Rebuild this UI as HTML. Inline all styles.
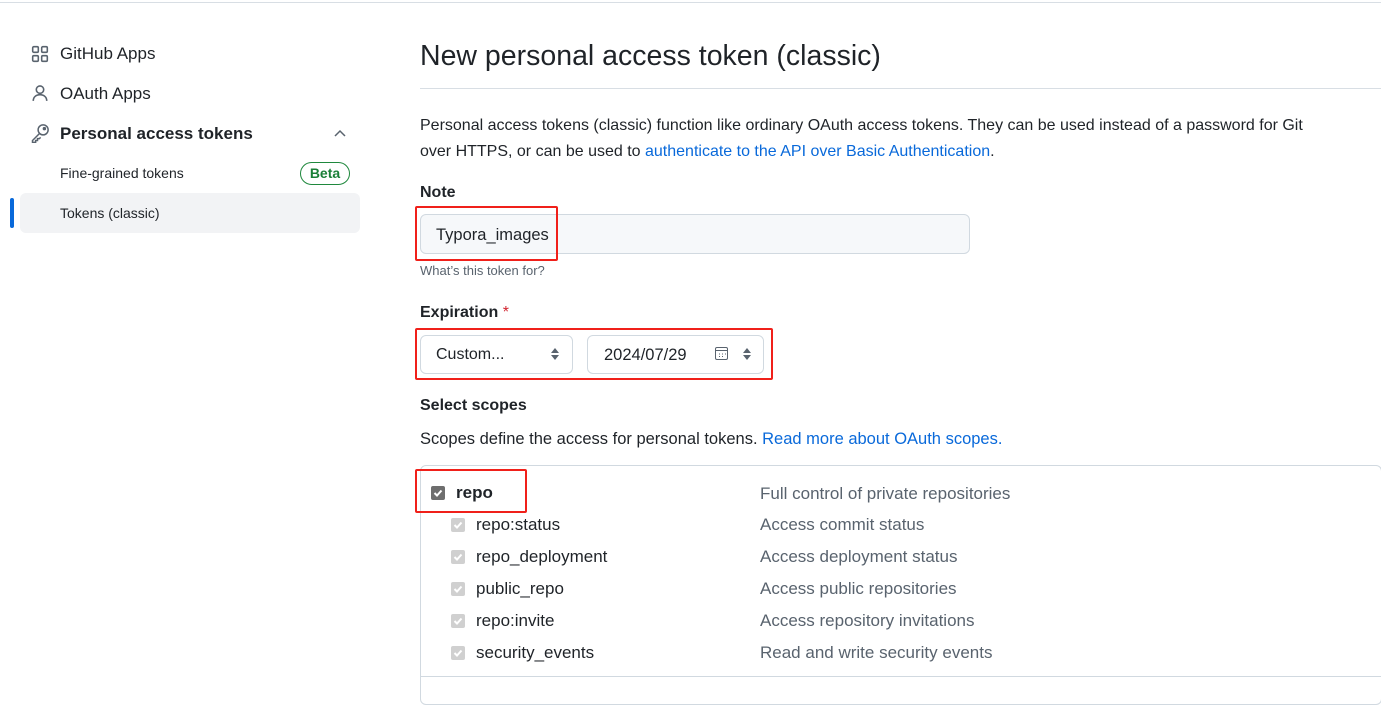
<!DOCTYPE html>
<html><head><meta charset="utf-8"><style>
*{margin:0;padding:0;box-sizing:border-box}
body{width:1381px;height:684px;overflow:hidden;background:#fff;font-family:"Liberation Sans",sans-serif;color:#1f2328;position:relative}
.a{position:absolute;white-space:nowrap}
.m{color:#59636e}
.lk{color:#0969da}
.red{position:absolute;border:2px solid #f0201a;border-radius:2px}
.inp{position:absolute;border:1px solid #d1d9e0;border-radius:6px}
.cb{position:absolute;width:14px;height:14px;border-radius:2px;background:#d0d0d0}
.cb svg{position:absolute;left:1px;top:1px}
</style></head><body>
<div class="a" style="left:0;top:2px;width:1381px;height:1px;background:#d8dee4"></div>

<svg class="a" style="left:31px;top:45px" width="18" height="18" viewBox="0 0 16 16" fill="none" stroke="#59636e" stroke-width="1.4"><rect x="1.5" y="1.5" width="5" height="5" rx="1"/><rect x="9.5" y="1.5" width="5" height="5" rx="1"/><rect x="1.5" y="9.5" width="5" height="5" rx="1"/><rect x="9.5" y="9.5" width="5" height="5" rx="1"/></svg>
<div class="a" style="left:60px;top:44px;font-size:17px">GitHub Apps</div>
<svg class="a" style="left:31px;top:84px" width="18" height="18" viewBox="0 0 16 16" fill="none" stroke="#59636e" stroke-width="1.4"><circle cx="8" cy="5" r="3.3"/><path d="M2 15c0-3.5 2.7-5.5 6-5.5s6 2 6 5.5"/></svg>
<div class="a" style="left:60px;top:84px;font-size:17px">OAuth Apps</div>
<svg class="a" style="left:30px;top:123px" width="20" height="20" viewBox="0 0 16 16" fill="none" stroke="#59636e" stroke-width="1.2"><circle cx="10.5" cy="5.5" r="4"/><path d="M7.5 8.5L2 14v1.5h2.5V14H6v-1.5h1.5l1-1"/><circle cx="11.5" cy="4.5" r=".8" fill="#59636e"/></svg>
<div class="a" style="left:60px;top:124px;font-size:17px;font-weight:bold">Personal access tokens</div>
<svg class="a" style="left:333px;top:128px" width="14" height="10" viewBox="0 0 14 10" fill="none" stroke="#59636e" stroke-width="1.5"><path d="M2 8l5-5 5 5"/></svg>
<div class="a" style="left:60px;top:165px;font-size:14px">Fine-grained tokens</div>
<div class="a" style="left:300px;top:162px;width:50px;height:23px;border:1px solid #1f883d;border-radius:12px;color:#1a7f37;font-size:14px;font-weight:bold;text-align:center;line-height:21px">Beta</div>
<div class="a" style="left:20px;top:193px;width:340px;height:40px;background:#f2f3f5;border-radius:6px"></div>
<div class="a" style="left:10px;top:198px;width:4px;height:30px;background:#0969da;border-radius:2px"></div>
<div class="a" style="left:60px;top:205px;font-size:14px">Tokens (classic)</div>

<div class="a" style="left:420px;top:40px;font-size:28.5px">New personal access token (classic)</div>
<div class="a" style="left:420px;top:88px;width:961px;height:1px;background:#d8dee4"></div>
<div class="a" style="left:420px;top:113px;font-size:16px;line-height:26px;white-space:normal;width:900px">Personal access tokens (classic) function like ordinary OAuth access tokens. They can be used instead of a password for Git over HTTPS, or can be used to <span class="lk">authenticate to the API over Basic Authentication</span>.</div>

<div class="a" style="left:420px;top:184px;font-size:16px;font-weight:bold">Note</div>
<div class="inp" style="left:420px;top:214px;width:550px;height:40px;background:#f6f8fa"></div>
<div class="a" style="left:436px;top:226px;font-size:16.5px">Typora_images</div>
<div class="red" style="left:415px;top:206px;width:143px;height:55px"></div>
<div class="a m" style="left:420px;top:263px;font-size:13px">What’s this token for?</div>

<div class="a" style="left:420px;top:304px;font-size:16px;font-weight:bold">Expiration <span style="color:#d1242f;font-weight:normal">*</span></div>
<div class="inp" style="left:420px;top:335px;width:153px;height:39px"></div>
<div class="a" style="left:436px;top:346px;font-size:16px">Custom...</div>
<svg class="a" style="left:550px;top:347px" width="10" height="14" viewBox="0 0 10 14" fill="#59636e"><path d="M5 1l4 5H1zM5 13l4-5H1z"/></svg>
<div class="inp" style="left:587px;top:335px;width:177px;height:39px"></div>
<div class="a" style="left:604px;top:346px;font-size:16.5px">2024/07/29</div>
<svg class="a" style="left:714px;top:346px" width="15" height="15" viewBox="0 0 15 15" fill="none" stroke="#59636e"><rect x="1.5" y="1.5" width="12" height="12" rx="1.5"/><path d="M1.5 4.5h12M5 8h1M8 8h1M11 8h1M5 10.5h1M8 10.5h1"/></svg>
<svg class="a" style="left:742px;top:347px" width="10" height="14" viewBox="0 0 10 14" fill="#59636e"><path d="M5 1l4 5H1zM5 13l4-5H1z"/></svg>
<div class="red" style="left:415px;top:328px;width:358px;height:52px"></div>

<div class="a" style="left:420px;top:397px;font-size:16px;font-weight:bold">Select scopes</div>
<div class="a" style="left:420px;top:430px;font-size:16.5px">Scopes define the access for personal tokens. <span class="lk">Read more about OAuth scopes.</span></div>

<div class="a" style="left:420px;top:465px;width:962px;height:240px;border:1px solid #d1d9e0;border-radius:6px"></div>
<div class="a" style="left:421px;top:676px;width:960px;height:1px;background:#d1d9e0"></div>

<div class="cb" style="left:431px;top:486px;background:#6e6e6e"><svg width="12" height="12" viewBox="0 0 12 12" fill="none" stroke="#fff" stroke-width="2"><path d="M2.5 6l2.5 2.5 4.5-5"/></svg></div>
<div class="a" style="left:456px;top:483px;font-size:17px;font-weight:bold">repo</div>
<div class="a m" style="left:760px;top:484px;font-size:17px">Full control of private repositories</div>
<div class="red" style="left:415px;top:469px;width:112px;height:44px"></div>

<div class="cb" style="left:451px;top:518px"><svg width="12" height="12" viewBox="0 0 12 12" fill="none" stroke="#fff" stroke-width="2"><path d="M2.5 6l2.5 2.5 4.5-5"/></svg></div>
<div class="a" style="left:476px;top:515px;font-size:17px">repo:status</div>
<div class="a m" style="left:760px;top:515px;font-size:17px">Access commit status</div>
<div class="cb" style="left:451px;top:550px"><svg width="12" height="12" viewBox="0 0 12 12" fill="none" stroke="#fff" stroke-width="2"><path d="M2.5 6l2.5 2.5 4.5-5"/></svg></div>
<div class="a" style="left:476px;top:547px;font-size:17px">repo_deployment</div>
<div class="a m" style="left:760px;top:547px;font-size:17px">Access deployment status</div>
<div class="cb" style="left:451px;top:582px"><svg width="12" height="12" viewBox="0 0 12 12" fill="none" stroke="#fff" stroke-width="2"><path d="M2.5 6l2.5 2.5 4.5-5"/></svg></div>
<div class="a" style="left:476px;top:579px;font-size:17px">public_repo</div>
<div class="a m" style="left:760px;top:579px;font-size:17px">Access public repositories</div>
<div class="cb" style="left:451px;top:614px"><svg width="12" height="12" viewBox="0 0 12 12" fill="none" stroke="#fff" stroke-width="2"><path d="M2.5 6l2.5 2.5 4.5-5"/></svg></div>
<div class="a" style="left:476px;top:611px;font-size:17px">repo:invite</div>
<div class="a m" style="left:760px;top:611px;font-size:17px">Access repository invitations</div>
<div class="cb" style="left:451px;top:646px"><svg width="12" height="12" viewBox="0 0 12 12" fill="none" stroke="#fff" stroke-width="2"><path d="M2.5 6l2.5 2.5 4.5-5"/></svg></div>
<div class="a" style="left:476px;top:643px;font-size:17px">security_events</div>
<div class="a m" style="left:760px;top:643px;font-size:17px">Read and write security events</div>
</body></html>
